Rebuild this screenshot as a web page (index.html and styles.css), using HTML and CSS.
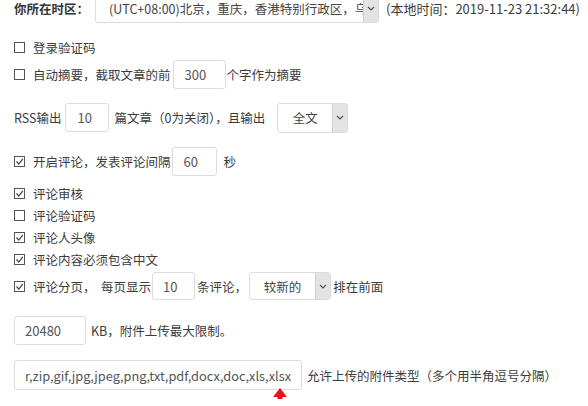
FILE: index.html
```html
<!DOCTYPE html>
<html lang="zh-CN">
<head>
<meta charset="utf-8">
<title>设置</title>
<link rel="stylesheet" href="styles.css">
</head>
<body>
<div class="page">
  <div class="row row-tz">
    <span class="label-bold">你所在时区：</span>
    <div class="select sel-tz">
      <span class="sel-text">(UTC+08:00)北京，重庆，香港特别行政区，乌鲁木齐</span>
      <span class="sel-btn"><svg width="8" height="5" viewBox="0 0 8 5"><polyline points="1,1 4,4 7,1" fill="none" stroke="#555" stroke-width="1.2"/></svg></span>
    </div>
    <span class="local-time">(本地时间：2019-11-23 21:32:44)</span>
  </div>

  <div class="row row-check r-login">
    <span class="cb"></span><span>登录验证码</span>
  </div>

  <div class="row row-input r-summary">
    <span class="cb"></span><span>自动摘要，截取文章的前</span>
    <div class="input in-300">300</div>
    <span>个字作为摘要</span>
  </div>

  <div class="row row-input r-rss">
    <span>RSS输出</span>
    <div class="input in-rss">10</div>
    <span>篇文章（0为关闭），且输出</span>
    <div class="select sel-full">
      <span class="sel-text center">全文</span>
      <span class="sel-btn"><svg width="8" height="5" viewBox="0 0 8 5"><polyline points="1,1 4,4 7,1" fill="none" stroke="#555" stroke-width="1.2"/></svg></span>
    </div>
  </div>

  <div class="row row-input r-comment">
    <span class="cb checked"><svg width="9" height="9" viewBox="0 0 9 9"><polyline points="1.5,4.5 3.8,7 7.8,1.8" fill="none" stroke="#444" stroke-width="1.2"/></svg></span><span>开启评论，发表评论间隔</span>
    <div class="input in-60">60</div>
    <span class="sec">秒</span>
  </div>

  <div class="row row-check r-audit">
    <span class="cb checked"><svg width="9" height="9" viewBox="0 0 9 9"><polyline points="1.5,4.5 3.8,7 7.8,1.8" fill="none" stroke="#444" stroke-width="1.2"/></svg></span><span>评论审核</span>
  </div>
  <div class="row row-check">
    <span class="cb"></span><span>评论验证码</span>
  </div>
  <div class="row row-check">
    <span class="cb checked"><svg width="9" height="9" viewBox="0 0 9 9"><polyline points="1.5,4.5 3.8,7 7.8,1.8" fill="none" stroke="#444" stroke-width="1.2"/></svg></span><span>评论人头像</span>
  </div>
  <div class="row row-check">
    <span class="cb checked"><svg width="9" height="9" viewBox="0 0 9 9"><polyline points="1.5,4.5 3.8,7 7.8,1.8" fill="none" stroke="#444" stroke-width="1.2"/></svg></span><span>评论内容必须包含中文</span>
  </div>

  <div class="row row-input r-page">
    <span class="cb checked"><svg width="9" height="9" viewBox="0 0 9 9"><polyline points="1.5,4.5 3.8,7 7.8,1.8" fill="none" stroke="#444" stroke-width="1.2"/></svg></span><span>评论分页，&nbsp; 每页显示</span>
    <div class="input in-page">10</div>
    <span class="after-page">条评论，</span>
    <div class="select sel-order">
      <span class="sel-text center">较新的</span>
      <span class="sel-btn"><svg width="8" height="5" viewBox="0 0 8 5"><polyline points="1,1 4,4 7,1" fill="none" stroke="#555" stroke-width="1.2"/></svg></span>
    </div>
    <span class="front">排在前面</span>
  </div>

  <div class="row row-input r-size">
    <div class="input in-size">20480</div>
    <span>KB，附件上传最大限制。</span>
  </div>

  <div class="row row-input r-ext">
    <div class="input in-ext"><div class="ext-clip"><span>rar,zip,gif,jpg,jpeg,png,txt,pdf,docx,doc,xls,xlsx</span></div></div>
    <span>允许上传的附件类型（多个用半角逗号分隔）</span>
  </div>

  <div class="submit-row">
    <div class="btn"></div>
    <svg class="arrow" width="14" height="19" viewBox="0 0 14 19"><polygon points="7,0 14,9 9.5,9 9.5,19 4.5,19 4.5,9 0,9" fill="#e8141b"/></svg>
  </div>
</div>
</body>
</html>
```

FILE: styles.css
```css
html, body {
  margin: 0;
  padding: 0;
  background: #ffffff;
  overflow: hidden;
}

.page {
  font-family: "Noto Sans CJK SC", "Microsoft YaHei", sans-serif;
  font-size: 12.5px;
  color: #3c3c3c;
  padding-left: 14px;
  position: relative;
  height: 406px;
}

.row {
  display: flex;
  align-items: center;
  white-space: nowrap;
}

.row-check { height: 22px; }

.row-tz {
  height: 30px;
  margin-top: -7px;
}

.label-bold {
  font-weight: bold;
  color: #333;
  width: 81px;
}

.select {
  display: flex;
  align-items: stretch;
  border: 1px solid #dcdcdc;
  border-radius: 3px;
  box-sizing: border-box;
  background: #fff;
  overflow: hidden;
}

.sel-text {
  flex: 1;
  overflow: hidden;
  display: flex;
  align-items: center;
  color: #444;
}

.sel-text.center { justify-content: center; }

.sel-btn {
  width: 14px;
  background: #e3e3e3;
  border-left: 1px solid #cfcfcf;
  display: flex;
  align-items: center;
  justify-content: center;
}

.sel-tz {
  width: 284px;
  height: 30px;
}

.sel-tz .sel-text { padding-left: 13px; }

.local-time {
  margin-left: 7px;
  font-size: 13px;
  color: #3c3c3c;
}

.cb {
  width: 11px;
  height: 11px;
  border: 1px solid #555;
  box-sizing: border-box;
  margin-right: 8px;
  display: inline-flex;
  align-items: center;
  justify-content: center;
  flex: none;
}

.r-login { margin-top: 13px; }

.input {
  border: 1px solid #dcdcdc;
  border-radius: 3px;
  box-sizing: border-box;
  display: flex;
  align-items: center;
  color: #555;
  font-size: 13px;
  background: #fff;
  padding-left: 11px;
}

.row-input { height: 29px; }

.r-summary { margin-top: 2px; }

.in-300 { width: 53px; height: 29px; margin-left: 2px; margin-right: 1px; }

.r-rss { margin-top: 14px; }

.in-rss { width: 44px; height: 29px; margin-left: 4px; margin-right: 5px; }

.sel-full {
  width: 71px;
  height: 30px;
  margin-left: 12px;
}

.r-comment { margin-top: 15px; }

.in-60 { width: 45px; height: 29px; margin-left: 1px; }

.sec { margin-left: 7px; }

.r-audit { margin-top: 6px; }

.r-page { margin-top: 2px; height: 28px; }

.in-page { width: 43px; height: 28px; margin-left: 1px; padding-left: 10px; }

.after-page { margin-left: 2px; }

.sel-order {
  width: 82px;
  height: 28px;
  margin-left: 2px;
}

.front { margin-left: 2px; }

.r-size { margin-top: 16px; height: 29px; }

.in-size { width: 72px; height: 29px; margin-left: 0; margin-right: 5px; padding-left: 10px; }

.r-ext { margin-top: 15px; height: 30px; }

.in-ext {
  width: 288px;
  height: 30px;
  margin-left: 0;
  margin-right: 5px;
  padding: 0 10px 0 10px;
  font-size: 12.8px;
  color: #555;
}

.ext-clip {
  flex: 1;
  display: flex;
  justify-content: flex-end;
  overflow: hidden;
}

.ext-clip span { flex: none; }

.submit-row {
  position: relative;
  height: 20px;
  margin-top: 12px;
}

.btn {
  position: absolute;
  left: 204px;
  top: 1px;
  width: 117px;
  height: 20px;
  border: 1px solid #d6d6d6;
  border-radius: 3px;
}

.arrow {
  position: absolute;
  left: 259px;
  top: -14px;
}
```
